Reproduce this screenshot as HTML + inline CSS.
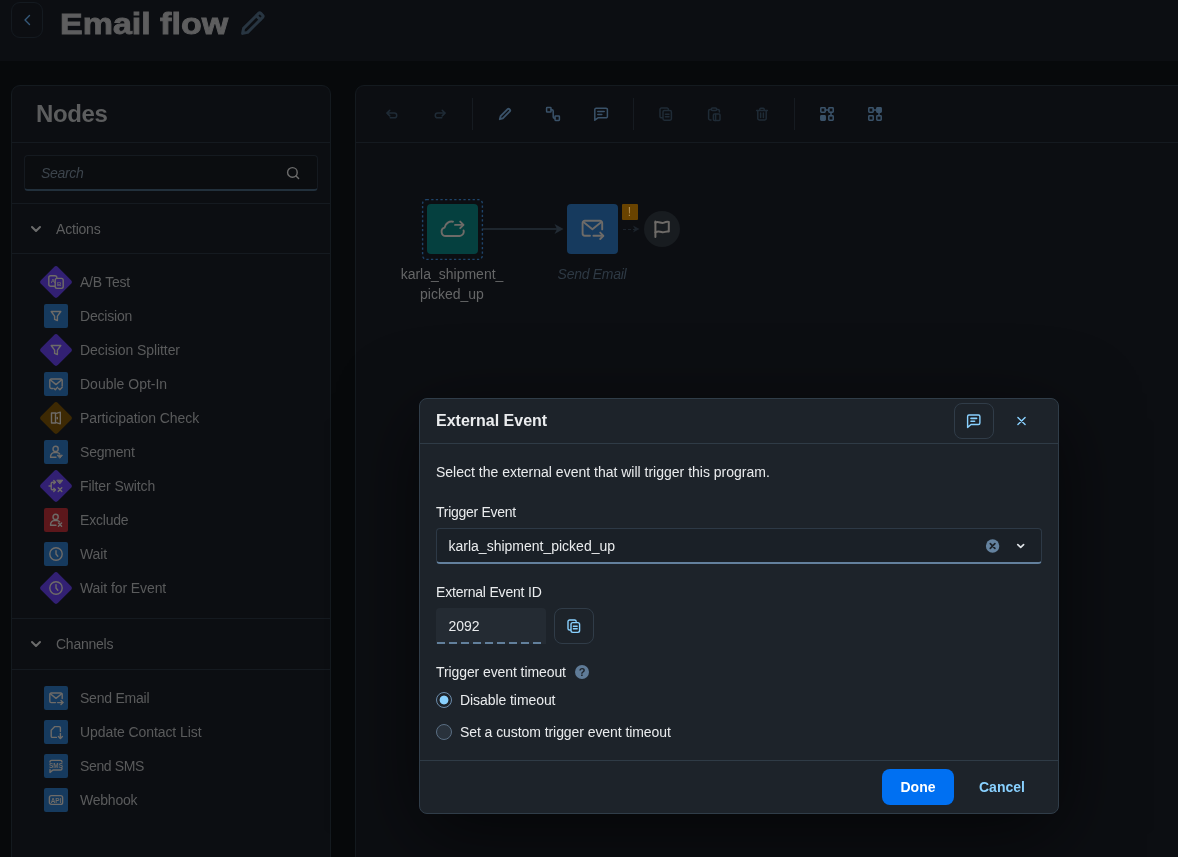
<!DOCTYPE html>
<html lang="en">
<head>
<meta charset="utf-8">
<title>Email flow</title>
<style>
*{box-sizing:border-box;margin:0;padding:0}
html{background:#07090b}
html,body{width:1178px;height:857px;overflow:hidden;font-family:"Liberation Sans",sans-serif;color:#5e5f60}
.abs{position:absolute}
#hdr{position:absolute;left:0;top:0;width:1178px;height:61px;background:#0c0e12}
#back{position:absolute;left:11px;top:2px;width:32px;height:36px;border:1px solid #141a20;border-radius:9px}
#title{position:absolute;left:60px;top:4px;font-size:29px;font-weight:bold;color:#5e5e5f;line-height:40px;white-space:nowrap;-webkit-text-stroke:0.9px #5e5e5f;transform:scaleX(1.172);transform-origin:0 0}
#left{position:absolute;left:11px;top:85px;width:320px;height:800px;background:#0c0e12;border:1px solid #141a1f;border-radius:9px}
#right{position:absolute;left:355px;top:85px;width:860px;height:800px;background:#0c0e12;border:1px solid #141a1f;border-radius:9px}
.hline{position:absolute;left:0;width:100%;height:1px;background:#151a20}
#nodes-title{letter-spacing:-0.4px;position:absolute;left:24px;top:12px;font-size:24px;font-weight:bold;color:#5c5d5e;line-height:32px}
#search{position:absolute;left:12px;top:69px;width:294px;height:36px;border:1px solid #151a20;border-bottom:2px solid #22303c;border-radius:4px;background:#0b0d10}
#search span{letter-spacing:-0.3px;position:absolute;left:16px;top:1px;line-height:33px;font-size:14px;font-style:italic;color:#3c444c}
.grp{position:absolute;left:44px;font-size:14px;line-height:20px;color:#5c5d5e;white-space:nowrap}
.item{position:absolute;left:68px;font-size:14px;line-height:20px;color:#5a5b5c;white-space:nowrap}
.sq{position:absolute;left:32px;width:24px;height:24px;border-radius:2px}
.dm{position:absolute;left:32px;width:24px;height:24px;border-radius:3px;transform:rotate(45deg)}
.blue{background:#163a5e}.purple{background:#322073}.red{background:#5c171b}.gold{background:#3d2903}
.ic{position:absolute;left:32px;width:24px;height:24px}
.ic svg{position:absolute;left:4px;top:4px;width:16px;height:16px;fill:none;stroke:#6e6b68;stroke-width:1.4;stroke-linecap:round;stroke-linejoin:round}
.tiny{font-family:"Liberation Sans",sans-serif;font-size:6px;font-weight:bold;fill:#6e6b68;stroke:none;text-anchor:middle}
.tiny.sm{font-size:6.4px}
.ic svg{color:#6e6b68}
.tb{position:absolute;top:20px;width:16px;height:16px;fill:none;stroke:#3a5269;stroke-width:1.5;stroke-linecap:round;stroke-linejoin:round}
.tb.dis{stroke:#1f2b36}
.tb .f{fill:#3a5269}
.vsep{position:absolute;top:12px;width:1px;height:32px;background:#161b21}
.nic{fill:none;stroke:#6e6b68;stroke-width:1.9;stroke-linecap:round;stroke-linejoin:round}
.lbl{font-size:14px;line-height:20px;text-align:center;color:#656667;white-space:nowrap}
/* dialog */
#dlg{position:absolute;left:419px;top:398px;width:640px;height:416px;background:#1d232a;border:1px solid #303d49;border-radius:8px;box-shadow:0 0 0 1px rgba(91,115,139,.0),0 20px 80px 0 rgba(0,0,0,.6);color:#eaecee;font-size:14px}
#dlg .t{position:absolute;white-space:nowrap;line-height:20px}
.dbtn{width:40px;height:36px;border:1px solid #303c48;border-radius:8px}
.dic{position:absolute;width:16px;height:16px;fill:none;stroke:#89d1ff;stroke-width:1.4;stroke-linecap:round;stroke-linejoin:round}
#sel{left:16px;top:128px;width:606px;height:36px;background:#1a2027;border:1px solid #2d3946;border-bottom:2px solid #63809d;border-radius:4px}
#ro{left:16px;top:208px;width:110px;height:36px;background:#242b33;border-radius:4px 4px 0 0;background-image:repeating-linear-gradient(90deg,#62809c 0 8px,transparent 8px 12px);background-size:105px 2px;background-position:1px 100%;background-repeat:no-repeat;background-color:#242b33}
.radio{width:16px;height:16px;border-radius:8px;border:1px solid #5a6e83;background:#29323c}
.radio.on{border-color:#6a8aa9;background:radial-gradient(circle at 50% 50%,#89d1ff 0 4px,#1d232a 4.8px)}
#done{left:462px;top:369px;width:72px;height:36px;border-radius:8px;background:#0070f2;color:#fff;font-weight:bold;font-size:14px;line-height:36px;text-align:center}
#cancel{left:559px;top:377px;font-weight:bold;color:#89d1ff}
body{will-change:transform}
</style>
</head>
<body>
<div id="hdr">
  <div id="back"><svg class="abs" style="left:8px;top:10px" width="14" height="14" viewBox="0 0 14 14" fill="none" stroke="#35597a" stroke-width="1.4" stroke-linecap="round" stroke-linejoin="round"><path d="M9.5 2.5 L5 7 L9.5 11.5"/></svg></div>
  <div id="title">Email flow</div>
  <svg class="abs" style="left:240px;top:10px" width="26" height="26" viewBox="0 0 26 26" fill="none" stroke="#283541" stroke-width="3" stroke-linejoin="round" stroke-linecap="round"><path d="M2.6 23.4 L3.6 18.4 L18.6 3.4 A1.6 1.6 0 0 1 20.8 3.4 L22.6 5.2 A1.6 1.6 0 0 1 22.6 7.4 L7.6 22.4 Z"/><path d="M16.4 5.8 L20.2 9.6"/></svg>
</div>
<div id="left">
  <div id="nodes-title">Nodes</div>
  <div class="hline" style="top:56px"></div>
  <div id="search"><span>Search</span><svg class="abs" style="left:260px;top:9px" width="16" height="16" viewBox="0 0 16 16" fill="none" stroke="#6c6c6c" stroke-width="1.4" stroke-linecap="round"><circle cx="7.4" cy="7.4" r="4.8"/><path d="M11 11 L13.6 13.6"/></svg></div>
  <div class="hline" style="top:117px"></div>
  <svg class="abs" style="left:17px;top:136px" width="14" height="14" viewBox="0 0 14 14" fill="none" stroke="#6c6c6c" stroke-width="2" stroke-linecap="round" stroke-linejoin="round"><path d="M3 5 L7 9 L11 5"/></svg>
  <div class="grp" style="top:133px;letter-spacing:-0.2px">Actions</div>
  <div class="hline" style="top:167px"></div>
  <div class="hline" style="top:532px"></div>
  <svg class="abs" style="left:17px;top:551px" width="14" height="14" viewBox="0 0 14 14" fill="none" stroke="#6c6c6c" stroke-width="2" stroke-linecap="round" stroke-linejoin="round"><path d="M3 5 L7 9 L11 5"/></svg>
  <div class="grp" style="top:548px;letter-spacing:-0.24px">Channels</div>
  <div class="hline" style="top:583px"></div>
  <!--ITEMS-->
  <div class="dm purple" style="top:184px"></div>
  <div class="ic" style="top:184px;--bg:#322073"><svg viewBox="0 0 16 16"><rect x="0.8" y="1.8" width="8" height="10.4" rx="1.8"/><rect x="7.2" y="4.4" width="8" height="10" rx="1.8" fill="var(--bg)"/><text x="4.8" y="9.2" class="tiny">A</text><text x="11.2" y="11.9" class="tiny">B</text></svg></div>
  <div class="item" style="top:186px;letter-spacing:-0.24px">A/B Test</div>
  <div class="sq blue" style="top:218px"></div>
  <div class="ic" style="top:218px;--bg:#163a5e"><svg viewBox="0 0 16 16"><path d="M3.2 3.5 H12.8 L9.4 8.2 V12.6 L6.6 11.4 V8.2 Z"/></svg></div>
  <div class="item" style="top:220px;letter-spacing:-0.2px">Decision</div>
  <div class="dm purple" style="top:252px"></div>
  <div class="ic" style="top:252px;--bg:#322073"><svg viewBox="0 0 16 16"><path d="M3.2 3.5 H12.8 L9.4 8.2 V12.6 L6.6 11.4 V8.2 Z"/></svg></div>
  <div class="item" style="top:254px;letter-spacing:-0.07px">Decision Splitter</div>
  <div class="sq blue" style="top:286px"></div>
  <div class="ic" style="top:286px;--bg:#163a5e"><svg viewBox="0 0 16 16"><path d="M5 12.5 H3.2 A1.4 1.4 0 0 1 1.8 11.1 V4.4 A1.4 1.4 0 0 1 3.2 3 H12.8 A1.4 1.4 0 0 1 14.2 4.4 V10"/><path d="M2.3 3.8 L8 8.6 L13.7 3.8"/><path d="M6 12.4 L7.3 13.7 L9.6 11.3"/><path d="M10.6 12.4 L11.9 13.7 L14.2 11.3"/></svg></div>
  <div class="item" style="top:288px">Double Opt-In</div>
  <div class="dm gold" style="top:320px"></div>
  <div class="ic" style="top:320px;--bg:#3d2903"><svg viewBox="0 0 16 16"><path d="M7.5 3 H3.5 V13 H7.5"/><path d="M7.5 3.6 L12.3 2.2 V13.8 L7.5 12.4 Z"/><path d="M9.3 7.4 V8.8"/></svg></div>
  <div class="item" style="top:322px;letter-spacing:-0.08px">Participation Check</div>
  <div class="sq blue" style="top:354px"></div>
  <div class="ic" style="top:354px;--bg:#163a5e"><svg viewBox="0 0 16 16"><circle cx="7.6" cy="4.9" r="2.6"/><path d="M2.6 13.2 V12.2 A3.6 3.6 0 0 1 6.2 8.6 H9 A3.6 3.6 0 0 1 11.6 9.7"/><path d="M2.6 13.2 H8"/><path d="M9.6 11.2 H14.4 L12 14 Z" fill="currentColor" stroke-width="1"/></svg></div>
  <div class="item" style="top:356px;letter-spacing:-0.2px">Segment</div>
  <div class="dm purple" style="top:388px"></div>
  <div class="ic" style="top:388px;--bg:#322073"><svg viewBox="0 0 16 16"><path d="M1 8 H3.2"/><path d="M7 4.2 H4.6 A1.4 1.4 0 0 0 3.2 5.6 V10.4 A1.4 1.4 0 0 0 4.6 11.8 H7"/><path d="M5.8 2.6 L7.4 4.2 L5.8 5.8"/><path d="M5.8 10.2 L7.4 11.8 L5.8 13.4"/><path d="M9.2 2.2 H14.8 L12 5.6 Z" fill="currentColor" stroke-width="1"/><path d="M10.2 9.8 L13.8 13.4 M13.8 9.8 L10.2 13.4"/></svg></div>
  <div class="item" style="top:390px;letter-spacing:-0.08px">Filter Switch</div>
  <div class="sq red" style="top:422px"></div>
  <div class="ic" style="top:422px;--bg:#5c1521"><svg viewBox="0 0 16 16"><circle cx="7.6" cy="4.9" r="2.6"/><path d="M2.6 13.2 V12.2 A3.6 3.6 0 0 1 6.2 8.6 H9 A3.6 3.6 0 0 1 11.6 9.7"/><path d="M2.6 13.2 H8"/><path d="M10.4 11 L13.6 14.2 M13.6 11 L10.4 14.2"/></svg></div>
  <div class="item" style="top:424px;letter-spacing:-0.2px">Exclude</div>
  <div class="sq blue" style="top:456px"></div>
  <div class="ic" style="top:456px;--bg:#163a5e"><svg viewBox="0 0 16 16"><circle cx="8" cy="8" r="6.2"/><path d="M8 4.6 V8 L9.8 10.2"/></svg></div>
  <div class="item" style="top:458px;letter-spacing:-0.15px">Wait</div>
  <div class="dm purple" style="top:490px"></div>
  <div class="ic" style="top:490px;--bg:#322073"><svg viewBox="0 0 16 16"><circle cx="8" cy="8" r="6.2"/><path d="M8 4.6 V8 L9.8 10.2"/></svg></div>
  <div class="item" style="top:492px;letter-spacing:-0.09px">Wait for Event</div>
  <div class="sq blue" style="top:600px"></div>
  <div class="ic" style="top:600px;--bg:#163a5e"><svg viewBox="0 0 16 16"><path d="M7.5 12.6 H3.2 A1.4 1.4 0 0 1 1.8 11.2 V4.4 A1.4 1.4 0 0 1 3.2 3 H12.8 A1.4 1.4 0 0 1 14.2 4.4 V8.6"/><path d="M2.3 3.8 L8 8.4 L13.7 3.8"/><path d="M9.6 12.6 H14.8"/><path d="M13 10.6 L15 12.6 L13 14.6"/></svg></div>
  <div class="item" style="top:602px;letter-spacing:-0.23px">Send Email</div>
  <div class="sq blue" style="top:634px"></div>
  <div class="ic" style="top:634px;--bg:#163a5e"><svg viewBox="0 0 16 16"><path d="M8.4 13.4 H4.4 A1.2 1.2 0 0 1 3.2 12.2 V6.2 L6.8 2.6 H11.2 A1.2 1.2 0 0 1 12.4 3.8 V7.4"/><path d="M12.4 9.4 V14.2"/><path d="M10.4 12.4 L12.4 14.4 L14.4 12.4"/></svg></div>
  <div class="item" style="top:636px;letter-spacing:-0.08px">Update Contact List</div>
  <div class="sq blue" style="top:668px"></div>
  <div class="ic" style="top:668px;--bg:#163a5e"><svg viewBox="0 0 16 16"><path d="M2 4 A1.6 1.6 0 0 1 3.6 2.4 H12.4 A1.6 1.6 0 0 1 14 4"/><path d="M14 10.4 A1.6 1.6 0 0 1 12.4 12 H5 L2 14.4 V11.4"/><text x="8" y="9.9" class="tiny sm">SMS</text></svg></div>
  <div class="item" style="top:670px;letter-spacing:-0.37px">Send SMS</div>
  <div class="sq blue" style="top:702px"></div>
  <div class="ic" style="top:702px;--bg:#163a5e"><svg viewBox="0 0 16 16"><rect x="1.4" y="3.6" width="13.2" height="8.8" rx="2"/><text x="8" y="10.5" class="tiny sm">API</text></svg></div>
  <div class="item" style="top:704px;letter-spacing:-0.23px">Webhook</div>
  <!--/ITEMS-->
</div>
<div id="right">
  <svg class="tb dis" style="left:28px" viewBox="0 0 16 16"><path d="M5.8 4.3 L3 7.1 L5.8 9.9"/><path d="M3.2 7.1 H10.4 A2.35 2.35 0 0 1 10.4 11.8 H6.2"/></svg>
  <svg class="tb dis" style="left:76px" viewBox="0 0 16 16"><path d="M10.2 4.3 L13 7.1 L10.2 9.9"/><path d="M12.8 7.1 H5.6 A2.35 2.35 0 0 0 5.6 11.8 H9.8"/></svg>
  <svg class="tb" style="left:141px" viewBox="0 0 16 16"><path d="M2.8 13.2 L3.6 10.2 L10.6 3.2 A1.3 1.3 0 0 1 12.4 3.2 L12.8 3.6 A1.3 1.3 0 0 1 12.8 5.4 L5.8 12.4 Z" stroke-width="1.9"/></svg>
  <svg class="tb" style="left:189px" viewBox="0 0 16 16"><rect x="1.6" y="1.6" width="4.4" height="4.4" rx="0.6"/><rect x="10" y="10" width="4.4" height="4.4" rx="0.6"/><path d="M6 3.8 H7 A1.2 1.2 0 0 1 8.2 5 V11 A1.2 1.2 0 0 0 9.4 12.2 H10"/></svg>
  <svg class="tb" style="left:237px" viewBox="0 0 16 16"><path d="M3 2.2 H13 A1.4 1.4 0 0 1 14.4 3.6 V10.4 A1.4 1.4 0 0 1 13 11.8 H5 L1.8 14.2 V3.6 A1.4 1.4 0 0 1 3 2.2 Z"/><path d="M4.8 5.6 H11.2"/><path d="M4.8 8.4 H8.8"/></svg>
  <svg class="tb dis" style="left:302px" viewBox="0 0 16 16"><path d="M4.4 11.8 H3.4 A1.4 1.4 0 0 1 2 10.4 V3.4 A1.4 1.4 0 0 1 3.4 2 H9 A1.4 1.4 0 0 1 10.4 3.4"/><rect x="5" y="4.6" width="8.4" height="9.6" rx="1.4"/><path d="M7.4 8.2 H11 M7.4 10.8 H11"/></svg>
  <svg class="tb dis" style="left:350px" viewBox="0 0 16 16"><path d="M5.2 3.4 H4 A1.4 1.4 0 0 0 2.6 4.8 V12.6 A1.4 1.4 0 0 0 4 14 H5"/><path d="M10.8 3.4 H12 A1.4 1.4 0 0 1 13.4 4.8 V6"/><rect x="5.4" y="2" width="5.2" height="2.6" rx="1"/><rect x="7.4" y="8" width="6.6" height="6.4" rx="1"/><path d="M9.6 8 V14.4"/></svg>
  <svg class="tb dis" style="left:398px" viewBox="0 0 16 16"><path d="M2.6 4.4 H13.4"/><path d="M5.8 4.2 V3.2 A1 1 0 0 1 6.8 2.2 H9.2 A1 1 0 0 1 10.2 3.2 V4.2"/><path d="M3.8 4.6 V12.6 A1.4 1.4 0 0 0 5.2 14 H10.8 A1.4 1.4 0 0 0 12.2 12.6 V4.6"/><path d="M6.6 7 V11.4 M9.4 7 V11.4"/></svg>
  <svg class="tb" style="left:463px" viewBox="0 0 16 16"><rect x="1.8" y="1.8" width="4.4" height="4.4" rx="0.6"/><rect x="9.8" y="1.8" width="4.4" height="4.4" rx="0.6"/><rect x="1.8" y="9.8" width="4.4" height="4.4" rx="0.6" class="f"/><rect x="9.8" y="9.8" width="4.4" height="4.4" rx="0.6"/><path d="M6.2 4 H9.8 M12 6.2 V9.8"/></svg>
  <svg class="tb" style="left:511px" viewBox="0 0 16 16"><rect x="1.8" y="1.8" width="4.4" height="4.4" rx="0.6"/><rect x="9.8" y="1.8" width="4.4" height="4.4" rx="0.6" class="f"/><rect x="1.8" y="9.8" width="4.4" height="4.4" rx="0.6"/><rect x="9.8" y="9.8" width="4.4" height="4.4" rx="0.6"/><path d="M6.2 4 H9.8 M12 6.2 V9.8"/></svg>
  <div class="vsep" style="left:116px"></div>
  <div class="vsep" style="left:277px"></div>
  <div class="vsep" style="left:438px"></div>
  <div class="hline" style="top:56px"></div>
  <svg class="abs" style="left:65px;top:111.5px" width="63" height="63" viewBox="0 0 63 63" fill="none"><rect x="1.6" y="1.6" width="59.8" height="59.8" rx="4" stroke="#1f446a" stroke-width="1.4" stroke-dasharray="2.3 2.3"/></svg>
  <div class="abs" style="left:71px;top:117.5px;width:50.5px;height:50px;border-radius:4px;background:#05403f"></div>
  <svg class="abs nic" style="left:84px;top:130px" width="25" height="25" viewBox="0 0 25 25"><path d="M19.4 20 H5.8 A4.3 4.3 0 0 1 4.6 11.6 A7.2 7.2 0 0 1 13 5.7"/><path d="M23.6 14.4 A4.4 4.4 0 0 1 19.4 20"/><path d="M15 8.9 H23.2"/><path d="M20.2 5.6 L23.5 8.9 L20.2 12.2"/></svg>
  <div class="abs lbl" style="left:16px;top:178px;width:160px">karla_shipment_<br>picked_up</div>
  <div class="abs" style="left:127px;top:142px;width:76px;height:2px;background:#1e262e"></div>
  <svg class="abs" style="left:197px;top:137px" width="11" height="12" viewBox="0 0 11 12" fill="#222b34"><path d="M1.5 1 L10.5 6 L1.5 11 L4 6 Z"/></svg>
  <div class="abs" style="left:211px;top:117.5px;width:50.5px;height:50px;border-radius:4px;background:#163a5e"></div>
  <svg class="abs nic" style="left:224px;top:130px" width="25" height="25" viewBox="0 0 25 25"><path d="M10 19.8 H4.8 A2.2 2.2 0 0 1 2.6 17.6 V7 A2.2 2.2 0 0 1 4.8 4.8 H20 A2.2 2.2 0 0 1 22.2 7 V13.4"/><path d="M3.4 6 L12.4 13.2 L21.4 6"/><path d="M13.4 19.8 H23"/><path d="M20.2 16.6 L23.4 19.8 L20.2 23"/></svg>
  <div class="abs" style="left:265.5px;top:117.5px;width:16px;height:16.5px;background:#694300;border-radius:1px;color:#b38f52;font-size:12px;line-height:16px;text-align:center">!</div>
  <div class="abs lbl" style="left:156px;top:178px;width:160px;font-style:italic;letter-spacing:-0.28px;color:#2e3944">Send Email</div>
  <div class="abs" style="left:267px;top:142.5px;width:12px;height:1px;background:repeating-linear-gradient(90deg,#1c232b 0 3px,transparent 3px 5px)"></div>
  <svg class="abs" style="left:276px;top:139px" width="8" height="8" viewBox="0 0 8 8" fill="#1c232b"><path d="M1 0.5 L7.5 4 L1 7.5 L2.8 4 Z"/></svg>
  <div class="abs" style="left:288px;top:125px;width:36px;height:36px;border-radius:18px;background:#181c20"></div>
  <svg class="abs" style="left:296px;top:133px;fill:none;stroke:#6e6b68;stroke-width:2;stroke-linecap:round;stroke-linejoin:round" width="20" height="20" viewBox="0 0 20 20"><path d="M3.4 18 V2.6"/><path d="M3.4 3.6 C6.4 1.6 9 5 12 3.6 C13.6 2.9 15.4 2.6 16.8 3 V12.6 C13.6 11.8 12.4 14 9.6 13 C7.4 12.2 5.4 12 3.4 13.4"/></svg>
</div>
<div id="dlg"><div class="abs" style="left:0;top:1px">
  <div class="t" style="left:16px;top:11px;font-size:16px;font-weight:bold">External Event</div>
  <div class="abs dbtn" style="left:534px;top:3px"><svg class="dic" style="left:11px;top:9px" viewBox="0 0 16 16"><path d="M3 2 H12.4 A1.5 1.5 0 0 1 13.9 3.5 V10 A1.5 1.5 0 0 1 12.4 11.5 H5 L1.6 14.4 V3.5 A1.5 1.5 0 0 1 3 2 Z"/><path d="M5 5.4 H10.6" stroke-width="1.6"/><path d="M5 8.2 H8.6" stroke-width="1.6"/></svg></div>
  <svg class="dic abs" style="left:593px;top:13px" viewBox="0 0 16 16"><path d="M4.9 4.4 L12.1 11.6 M12.1 4.4 L4.9 11.6"/></svg>
  <div class="abs" style="left:0;top:43px;width:638px;height:1px;background:#2f3b46"></div>
  <div class="t" style="left:16px;top:62px">Select the external event that will trigger this program.</div>
  <div class="t" style="left:16px;top:102px;letter-spacing:-0.28px">Trigger Event</div>
  <div class="abs" id="sel"><span class="t" style="left:11.5px;top:7px">karla_shipment_picked_up</span>
    <svg class="abs" style="left:549px;top:9.5px;overflow:visible" width="14" height="14" viewBox="0 0 14 14"><circle cx="6.6" cy="7" r="6.7" fill="#64829f"/><path d="M4.3 4.7 L8.9 9.3 M8.9 4.7 L4.3 9.3" stroke="#1b2128" stroke-width="1.7" stroke-linecap="round"/></svg>
    <svg class="abs" style="left:578px;top:10.5px" width="12" height="12" viewBox="0 0 12 12" fill="none" stroke="#dfe3e7" stroke-width="1.7" stroke-linecap="round" stroke-linejoin="round"><path d="M2.8 4.7 L5.7 7.4 L8.6 4.7"/></svg>
  </div>
  <div class="t" style="left:16px;top:182px;letter-spacing:-0.2px">External Event ID</div>
  <div class="abs" id="ro"><span class="t" style="left:12.5px;top:8px">2092</span></div>
  <div class="abs dbtn" style="left:134px;top:208px"><svg class="dic" style="left:11px;top:9px" viewBox="0 0 16 16"><path d="M4.4 12 H3.6 A1.6 1.6 0 0 1 2 10.4 V3.6 A1.6 1.6 0 0 1 3.6 2 H8.6 A1.6 1.6 0 0 1 10.2 3.4"/><rect x="5" y="4.6" width="8.6" height="9.8" rx="1.8"/><path d="M7.4 8.2 H11.2 M7.4 10.8 H11.2"/></svg></div>
  <div class="t" style="left:16px;top:262px;letter-spacing:-0.09px">Trigger event timeout</div>
  <div class="abs" style="left:155px;top:265px;width:14px;height:14px;border-radius:7px;background:#5f7b97;color:#1d232a;font-size:11px;font-weight:bold;line-height:14px;text-align:center">?</div>
  <div class="abs radio on" style="left:16px;top:292px"></div>
  <div class="t" style="left:40px;top:290px;letter-spacing:-0.07px">Disable timeout</div>
  <div class="abs radio" style="left:16px;top:324px"></div>
  <div class="t" style="left:40px;top:322px;letter-spacing:-0.07px">Set a custom trigger event timeout</div>
  <div class="abs" style="left:0;top:360px;width:638px;height:1px;background:#2f3b46"></div>
  <div class="abs" id="done">Done</div>
  <div class="t" id="cancel">Cancel</div>
</div></div>
</body>
</html>
